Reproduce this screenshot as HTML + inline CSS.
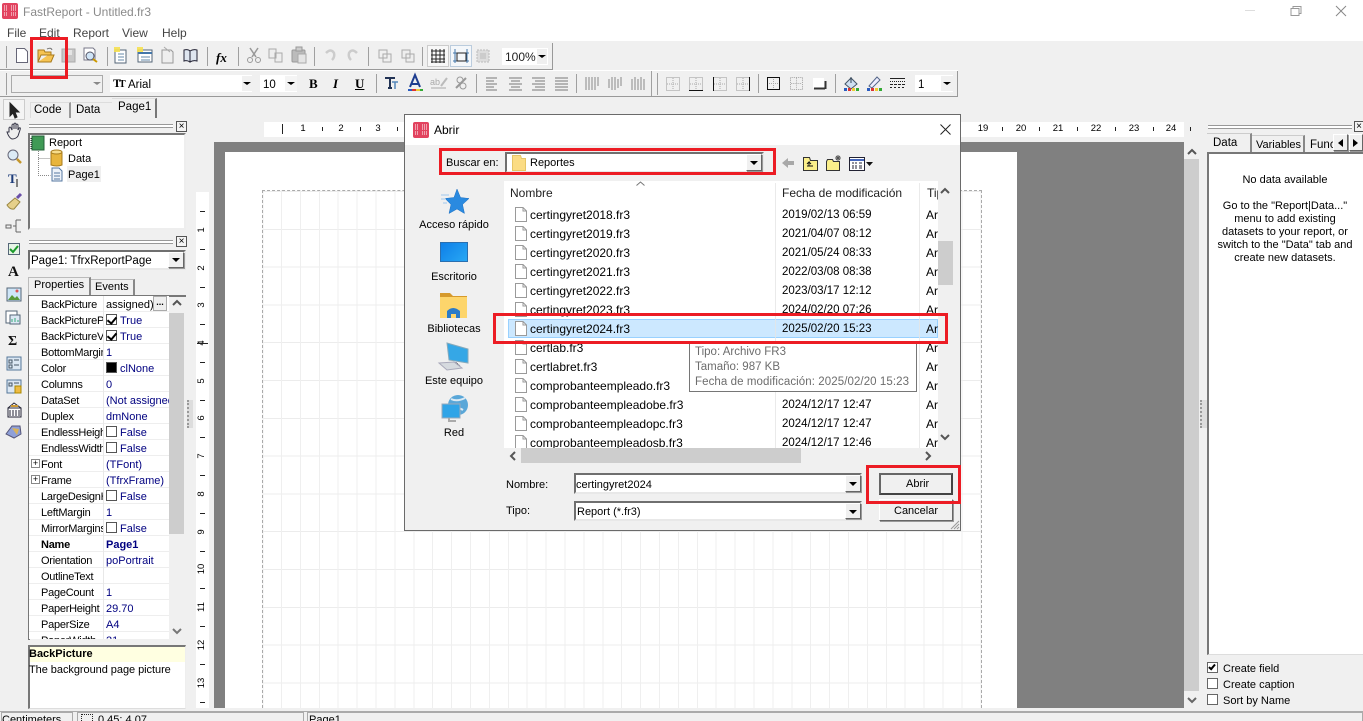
<!DOCTYPE html>
<html><head><meta charset="utf-8"><title>FastReport</title>
<style>
*{box-sizing:border-box}
html,body{margin:0;padding:0;width:1363px;height:721px;overflow:hidden;background:#f0f0f0;font:11px "Liberation Sans",sans-serif;color:#000}
#root{position:absolute;left:0;top:0;width:1363px;height:721px;overflow:hidden;background:#f0f0f0}
.a{position:absolute}
.t{position:absolute;white-space:nowrap;line-height:14px}
svg{position:absolute;overflow:visible}
.sep{position:absolute;width:1px;background:#a0a0a0}
.red{position:absolute;border:3px solid #ec1c24;z-index:50}
.sunk{position:absolute;background:#fff;border:2px solid;border-color:#6f6f6f #e8e8e8 #e8e8e8 #6f6f6f}
.btn{position:absolute;background:#f0f0f0;border:1px solid;border-color:#fff #666 #666 #fff;box-shadow:1px 1px 0 #999}
.ar{position:absolute;width:0;height:0;border-left:4px solid transparent;border-right:4px solid transparent;border-top:4px solid #000}
.grip{position:absolute;height:4px;border-top:1px solid #999;border-bottom:1px solid #999;background:#fff}
.xb{position:absolute;width:11px;height:11px;border:1px solid #555;background:#f4f4f4;font:10px/9px "Liberation Sans",sans-serif;text-align:center}
.r{height:16px;position:relative;border-bottom:1px solid #eee;white-space:nowrap;line-height:15px}
.r b,.r i{font-style:normal;font-weight:normal;position:absolute;top:1px;line-height:16px}
.r b{left:12px;width:62px;overflow:hidden;letter-spacing:-.25px}
.r i{left:77px;color:#000080}
.r .v{left:91px}
.r.n b,.r.n i{font-weight:bold}
.c{position:absolute;left:77px;top:2px;width:11px;height:11px;border:1px solid #555;background:#fff}
.c.k:after{content:"";position:absolute;left:2px;top:0;width:4px;height:7px;border:solid #000;border-width:0 2px 2px 0;transform:rotate(40deg)}
.f{height:19px;position:relative;font-size:12px;line-height:21px;white-space:nowrap}
.f span{position:absolute;top:0}
.f .d{left:278px;font-size:11.500px}
.f .y{left:422px}
.f .n{left:26px}
.f svg{left:11px;top:2px}
.hn{position:absolute;top:122px;font-size:9.5px;line-height:14px;width:20px;text-align:center}
.vn{position:absolute;left:195px;width:14px;height:14px;font-size:9.5px;line-height:14px;text-align:center;transform:rotate(-90deg)}
.ht{position:absolute;top:127px;width:1px;height:4px;background:#222}
.vt{position:absolute;left:200px;width:5px;height:1px;background:#222}
.lab{position:absolute;width:98px;left:405px;text-align:center;font-size:11px;line-height:14px}
.ck{position:absolute;left:1207px;width:11px;height:11px;border:1px solid #666;background:#fff}
</style></head><body><div id="root">
<svg width="0" height="0"><defs>
<symbol id="file" viewBox="0 0 12 15"><path d="M.5.5h7.5l3.5 3.5v10.500h-11z" fill="#fff" stroke="#9a9a9a"/><path d="M8 .5v3.500h3.500" fill="none" stroke="#9a9a9a"/></symbol>
<symbol id="logo" viewBox="0 0 16 16"><rect width="16" height="16" rx="2" fill="#e2435f"/><path d="M2 3h4M2 5h4M2 7h4M9 3h5M9 5h5M9 7h5M2 10h4M2 12h4M9 10h5M9 12h5" stroke="#fff" stroke-dasharray="1 1"/></symbol>
<symbol id="bx" viewBox="0 0 14 14"><rect x=".5" y=".5" width="13" height="13" fill="none" stroke="#999" stroke-dasharray="1 1"/><path d="M7 1v12M1 7h12" stroke="#aaa" stroke-dasharray="1 1"/></symbol>
</defs></svg>

<!-- title -->
<div class="a" style="left:0;top:0;width:1363px;height:41px;background:#fff"></div>
<svg style="left:2px;top:3px" width="16" height="16"><use href="#logo"/></svg>
<div class="t" style="left:23px;top:5px;font-size:12px;color:#8a8a8a">FastReport - Untitled.fr3</div>
<div class="t" style="left:7px;top:26px;font-size:12px;color:#444">File</div>
<div class="t" style="left:39px;top:26px;font-size:12px;color:#444">Edit</div>
<div class="t" style="left:73px;top:26px;font-size:12px;color:#444">Report</div>
<div class="t" style="left:122px;top:26px;font-size:12px;color:#444">View</div>
<div class="t" style="left:162px;top:26px;font-size:12px;color:#444">Help</div>
<svg style="left:1245px;top:5px" width="110" height="12"><path d="M0 5.500h10" stroke="#ddd"/><path d="M46 3.500h8v7h-8zM48 3.500v-2h8v7h-2" fill="none" stroke="#999"/><path d="M91 1l10 10M101 1l-10 10" stroke="#888"/></svg>

<!-- toolbars -->
<div class="a" style="left:0;top:43px;width:553px;height:27px;border-right:1px solid #999;border-bottom:1px solid #999"></div>
<div class="a" style="left:0;top:70px;width:958px;height:1px;background:#fff"></div>
<div class="a" style="left:0;top:71px;width:958px;height:26px;border-right:1px solid #999;border-bottom:1px solid #999"></div>
<div class="sep" style="left:6px;top:46px;height:22px"></div><div class="sep" style="left:6px;top:73px;height:22px"></div>
<div class="sep" style="left:107px;top:47px;height:19px"></div><div class="sep" style="left:207px;top:47px;height:19px"></div><div class="sep" style="left:238px;top:47px;height:19px"></div><div class="sep" style="left:314px;top:47px;height:19px"></div><div class="sep" style="left:368px;top:47px;height:19px"></div><div class="sep" style="left:422px;top:47px;height:19px"></div>
<svg style="left:0;top:0" width="560" height="70">
<path d="M16.500 48.500h8l3 3v11h-11z" fill="#fff" stroke="#667"/>
<path d="M38 62v-12h6l1 2h6v3h-10l-3 7h13l3-7h-6" fill="#f6c453" stroke="#a87a1c"/><path d="M47 49q4-2 5 1" fill="none" stroke="#777"/>
<rect x="62" y="49" width="13" height="13" fill="#c8c8c8" stroke="#aaa"/><rect x="65" y="50" width="7" height="5" fill="#e4e4e4"/>
<path d="M84 48h9l2 2v10h-11z" fill="#fff" stroke="#778"/><circle cx="90" cy="56" r="4" fill="#cfe4f6" stroke="#556"/><path d="M93 59l4 3" stroke="#c90" stroke-width="2"/>
<path d="M115 50h11v13h-11z" fill="#fff" stroke="#567"/><path d="M118 54h6M118 57h6M118 60h6" stroke="#68a"/><rect x="114" y="47" width="6" height="5" fill="#f5e050" opacity=".9"/>
<path d="M138 50h14v12h-14z" fill="#fff" stroke="#567"/><path d="M138 53h14" stroke="#47a" stroke-width="2"/><path d="M141 57h9M141 60h9" stroke="#68a"/><rect x="137" y="47" width="6" height="5" fill="#f5e050" opacity=".9"/>
<path d="M162 50h9l2 2v11h-11z" fill="#eee" stroke="#999"/><path d="M164 47l6 5" stroke="#aaa"/>
<path d="M184 50q4-1 6 1v11q-3-2-6-1zM190 51q3-2 7-1v11q-4-1-7 1z" fill="#dfe6f0" stroke="#223"/>
<text x="216" y="62" font-family="Liberation Serif" font-style="italic" font-weight="bold" font-size="13">fx</text>
<path d="M250 48l6 9M258 48l-6 9" stroke="#999" stroke-width="1.500"/><circle cx="250" cy="60" r="2.500" fill="none" stroke="#999"/><circle cx="258" cy="60" r="2.500" fill="none" stroke="#999"/>
<path d="M269 49h7v9h-7zM275 53h7v9h-7z" fill="#eee" stroke="#aaa"/>
<rect x="292" y="50" width="13" height="12" rx="1" fill="#bbb" stroke="#999"/><rect x="296" y="47" width="6" height="4" fill="#ccc" stroke="#999"/><rect x="298" y="54" width="8" height="9" fill="#e4e4e4" stroke="#aaa"/>
<path d="M326 53q5-5 8 0q1 4-2 7" fill="none" stroke="#ccc" stroke-width="2.500"/><path d="M357 53q-5-5-8 0q-1 4 2 7" fill="none" stroke="#ccc" stroke-width="2.500"/>
<path d="M379 50h8v8h-8zM383 54h8v8h-8z" fill="none" stroke="#aaa"/><path d="M402 50h8v8h-8zM406 54h8v8h-8z" fill="#eee" stroke="#aaa"/>
<rect x="427.500" y="45.500" width="21" height="21" fill="#f8f8f8" stroke="#ccc"/><path d="M433 49v14M437 49v14M441 49v14M445 49v14M432 51h14M432 55h14M432 59h14M432 62h14" stroke="#222" transform="translate(-1 0)"/>
<rect x="450.500" y="45.500" width="21" height="21" fill="#f4f7fa" stroke="#bcd"/><path d="M455 49v14M467 49v14M453 53h16M453 61h16" stroke="#47a"/><rect x="457" y="53" width="9" height="8" fill="none" stroke="#222"/>
<rect x="477" y="50" width="12" height="12" fill="#ddd" stroke="#bbb" stroke-dasharray="2 1"/><rect x="480" y="53" width="6" height="6" fill="#ccc"/>
</svg>
<div class="a" style="left:502px;top:48px;width:46px;height:17px;background:#fff"></div>
<div class="t" style="left:505px;top:50px;font-size:12px;color:#222">100%</div>
<div class="a" style="left:537px;top:49px;width:10px;height:15px;background:#efefef"></div><div class="ar" style="left:538px;top:55px;border-width:3px 4px 0"></div>

<div class="a" style="left:11px;top:75px;width:92px;height:18px;border:1px solid #aaa"></div><div class="ar" style="left:93px;top:82px;border-top-color:#888;border-width:3px 4px 0"></div>
<div class="a" style="left:110px;top:75px;width:142px;height:17px;background:#fff"></div>
<div class="t" style="left:113px;top:76px;font:bold 12px 'Liberation Serif',serif">T</div><div class="t" style="left:119px;top:79px;font:bold 10px 'Liberation Serif',serif">T</div>
<div class="t" style="left:128px;top:78px;font-size:11.500px">Arial</div>
<div class="a" style="left:242px;top:76px;width:10px;height:15px;background:#f0f0f0"></div><div class="ar" style="left:243px;top:82px;border-width:3px 4px 0"></div>
<div class="a" style="left:260px;top:75px;width:37px;height:17px;background:#fff"></div><div class="t" style="left:263px;top:78px;font-size:11.500px">10</div>
<div class="a" style="left:285px;top:76px;width:12px;height:15px;background:#f4f4f4"></div><div class="ar" style="left:287px;top:82px;border-width:3px 4px 0"></div>
<div class="t" style="left:309px;top:76px;font:bold 13px 'Liberation Serif',serif">B</div>
<div class="t" style="left:333px;top:76px;font:italic bold 13px 'Liberation Serif',serif">I</div>
<div class="t" style="left:355px;top:76px;font:bold 13px 'Liberation Serif',serif;text-decoration:underline">U</div>
<div class="sep" style="left:376px;top:74px;height:19px"></div><div class="sep" style="left:476px;top:74px;height:19px"></div><div class="sep" style="left:576px;top:74px;height:19px"></div><div class="sep" style="left:651px;top:71px;height:25px"></div><div class="sep" style="left:657px;top:73px;height:22px"></div><div class="sep" style="left:758px;top:74px;height:19px"></div><div class="sep" style="left:835px;top:74px;height:19px"></div>
<svg style="left:0;top:0" width="960" height="100">
<path d="M385 78h10M390 78v10M388 88h4" stroke="#223355" stroke-width="2" fill="none"/><path d="M392 82h6M395 82v7" stroke="#5588bb" stroke-width="1.500"/>
<path d="M410 87l5-12 5 12M412 84h6" fill="none" stroke="#1d3c8f" stroke-width="2"/><path d="M408 89h4v2h-4z" fill="#2a5cc0"/><path d="M412 89h4v2h-4z" fill="#d33"/><path d="M416 89h4v2h-4z" fill="#ec3"/><path d="M420 89h3v2h-3z" fill="#3a3"/>
<text x="430" y="85" font-size="9" fill="#aaa">ab</text><path d="M441 86l6-8" stroke="#bbb" stroke-width="2"/><path d="M431 88h15" stroke="#ccc" stroke-width="2"/>
<path d="M456 88l10-10" stroke="#999" stroke-width="2"/><circle cx="460" cy="80" r="3" fill="none" stroke="#999"/><circle cx="463" cy="86" r="3" fill="none" stroke="#999"/>
<path d="M486 78h11M486 81h8M486 84h11M486 87h8M486 90h11M509 78h13M511 81h9M509 84h13M511 87h9M509 90h13M532 78h13M535 81h10M532 84h13M535 87h10M532 90h13M555 78h13M555 81h13M555 84h13M555 87h13M555 90h13" stroke="#777"/>
<path d="M586 77v13M589 77v13M592 77v13M595 77v13M598 77v9M609 79v9M612 77v13M615 77v13M618 79v9M621 77v9M632 79v11M635 77v13M638 79v11M641 77v13M644 79v11" stroke="#888"/>
<use href="#bx" x="666" y="77" width="14" height="14"/><use href="#bx" x="689" y="77" width="14" height="14"/><path d="M689 90.500h14" stroke="#111"/><use href="#bx" x="713" y="77" width="14" height="14"/><path d="M713.500 77v14" stroke="#111"/><use href="#bx" x="736" y="77" width="14" height="14"/><path d="M749.500 77v14" stroke="#111"/>
<rect x="767.500" y="77.500" width="12" height="12" fill="none" stroke="#111"/><path d="M773.500 79v9M769 83.500h9" stroke="#aaa" stroke-dasharray="1 1"/>
<use href="#bx" x="790" y="77" width="13" height="13"/>
<rect x="813" y="78" width="11" height="10" fill="#fff"/><path d="M814 88.500h11M825.500 81v8" stroke="#333" stroke-width="2"/>
<path d="M845 84l6-6 6 6-6 5z" fill="#cfe0f2" stroke="#456"/><path d="M851 77v6" stroke="#345"/><path d="M844 88h3v3h-3z" fill="#2a5cc0"/><path d="M848 88h3v3h-3z" fill="#d33"/><path d="M852 88h3v3h-3z" fill="#ec3"/><path d="M856 88h3v3h-3z" fill="#3a3"/>
<path d="M869 86l8-9 3 3-8 8z" fill="#eef" stroke="#568"/><path d="M867 88h3v3h-3z" fill="#2a5cc0"/><path d="M871 88h3v3h-3z" fill="#d33"/><path d="M875 88h3v3h-3z" fill="#ec3"/><path d="M879 88h3v3h-3z" fill="#3a3"/>
<path d="M890 78.500h15" stroke="#222"/><path d="M890 81.500h15" stroke="#222" stroke-dasharray="1 1"/><path d="M890 84.500h15" stroke="#222" stroke-dasharray="3 1"/><path d="M890 87.500h15" stroke="#222" stroke-dasharray="2 2"/>
</svg>
<div class="a" style="left:915px;top:75px;width:38px;height:17px;background:#fff"></div><div class="t" style="left:918px;top:78px;font-size:11.500px">1</div>
<div class="a" style="left:941px;top:76px;width:12px;height:15px;background:#f0f0f0"></div><div class="ar" style="left:943px;top:82px;border-width:3px 4px 0"></div>

<!-- page tabs -->
<div class="a" style="left:3px;top:99px;width:22px;height:21px;background:#f4f4f4;border:1px solid #ccc"></div>
<div class="a" style="left:30px;top:102px;width:41px;height:16px;border-right:2px solid #999;border-top:1px solid #ddd;border-left:1px solid #ddd"></div>
<div class="a" style="left:72px;top:102px;width:40px;height:16px;border-top:1px solid #ddd"></div>
<div class="a" style="left:112px;top:98px;width:45px;height:20px;border-right:2px solid #777;border-top:1px solid #ddd;background:#f0f0f0"></div>
<div class="t" style="left:34px;top:103px;font-size:11.500px">Code</div><div class="t" style="left:76px;top:103px;font-size:11.500px">Data</div><div class="t" style="left:118px;top:100px;font-size:11.500px">Page1</div>

<!-- left tools -->
<svg style="left:0;top:0" width="28" height="450">
<path d="M10 103v13l3-3 2 5 2-1-2-5h4z" fill="#222" stroke="#222"/>
<path d="M9 132v-4q1-2 2 0l1 2v-5q1-2 2 0v4-5q1-2 2 0v5-4q1-2 2 0v5l1-2q2-1 1 2l-2 6q-2 3-6 3-3-1-5-7z" fill="#eee" stroke="#334" />
<circle cx="13" cy="155" r="5" fill="#dcebf7" stroke="#667"/><path d="M17 159l4 4" stroke="#c4962c" stroke-width="2.500"/>
<text x="8" y="183" font-family="Liberation Serif" font-weight="bold" font-size="13" fill="#1d3c7a">T</text><path d="M17 179v8" stroke="#111"/>
<path d="M7 205l8-7 5 4-6 7q-4 1-7-4z" fill="#e6d08a" stroke="#9a8742"/><path d="M17 198l4-4" stroke="#6a4fa8" stroke-width="3"/>
<path d="M6 225h5v3h-5zM13 226h3M16 220h5M16 232h5M16 220v12" fill="none" stroke="#666"/>
<rect x="8.500" y="243.500" width="11" height="11" fill="#e6f4e6" stroke="#567"/><path d="M10 249l3 3 5-6" fill="none" stroke="#1a9a2a" stroke-width="2"/>
<text x="8" y="276" font-family="Liberation Serif" font-weight="bold" font-size="15" fill="#111">A</text>
<rect x="7" y="288" width="14" height="13" fill="#cfe6f8" stroke="#567"/><path d="M8 300l4-5 3 3 2-2 3 4z" fill="#5a9a3a"/><circle cx="17" cy="291" r="1.500" fill="#d55"/>
<rect x="6" y="311" width="11" height="12" fill="#fff" stroke="#567"/><rect x="10" y="315" width="10" height="9" fill="#dde8f4" stroke="#567"/><path d="M12 322v-3M15 322v-4M18 322v-2" stroke="#3a7"/>
<text x="8" y="345" font-family="Liberation Serif" font-weight="bold" font-size="14" fill="#111">Σ</text>
<rect x="7" y="357" width="14" height="13" fill="#dbe7f3" stroke="#56779a"/><path d="M9 360h3v3h-3zM9 365h3v3h-3zM14 360h5M14 365h5" stroke="#456" fill="none"/>
<rect x="7" y="380" width="14" height="13" fill="#dbe7f3" stroke="#56779a"/><path d="M9 383h3v3h-3zM14 383h5" stroke="#456" fill="none"/><rect x="15" y="386" width="6" height="7" fill="#eebb44" stroke="#a80"/>
<path d="M8 408h13v9h-13zM8 408l6-5 7 5" fill="#fff" stroke="#223"/><path d="M10 410v6M13 410v6M16 410v6M19 410v6" stroke="#223"/><path d="M11 406h7" stroke="#c93" stroke-width="2"/>
<path d="M6 434l6-8h8l1 8-7 4z" fill="#8fa0d8" stroke="#557"/><path d="M12 428l7 1-2 6z" fill="#d8b25a"/>
</svg>

<!-- object tree -->
<div class="grip" style="left:29px;top:124px;width:144px"></div>
<div class="xb" style="left:176px;top:121px">×</div>
<div class="a" style="left:28px;top:133px;width:158px;height:97px;background:#fff;border:2px solid;border-color:#777 #eee #eee #777"></div>
<svg style="left:30px;top:134px" width="60" height="50">
<rect x="2" y="2" width="12" height="14" fill="#3f9a55" stroke="#24603a"/><path d="M1 4v11" stroke="#222" stroke-dasharray="1 1"/>
<path d="M8.500 17v24.500h12M8.500 24.500h12" stroke="#888" stroke-dasharray="1 1" fill="none"/>
<path d="M21 18q5-2 11 0v13q-5 2-11 0z" fill="#e8b53d" stroke="#a97c1c"/><ellipse cx="26.500" cy="18" rx="5.500" ry="2" fill="#f7dc8a" stroke="#a97c1c"/>
<path d="M22 34h7l3 3v10h-10z" fill="#eef3fa" stroke="#5577a0"/><path d="M24 39h6M24 42h6M24 45h6" stroke="#5577a0"/>
</svg>
<div class="t" style="left:49px;top:136px;font-size:11px">Report</div>
<div class="t" style="left:68px;top:152px;font-size:11px">Data</div>
<div class="a" style="left:67px;top:166px;width:34px;height:16px;background:#efefef"></div>
<div class="t" style="left:68px;top:168px;font-size:11px">Page1</div>

<!-- inspector -->
<div class="grip" style="left:29px;top:240px;width:144px"></div>
<div class="xb" style="left:176px;top:236px">×</div>
<div class="sunk" style="left:28px;top:250px;width:158px;height:20px"></div>
<div class="t" style="left:31px;top:254px;font-size:11.500px">Page1: TfrxReportPage</div>
<div class="btn" style="left:168px;top:252px;width:16px;height:16px"></div><div class="ar" style="left:172px;top:258px"></div>
<div class="a" style="left:28px;top:277px;width:63px;height:19px;background:#f0f0f0;border:1px solid #bbb;border-bottom:0;border-right:2px solid #888"></div>
<div class="a" style="left:91px;top:279px;width:44px;height:17px;border-top:1px solid #bbb;border-right:2px solid #888"></div>
<div class="t" style="left:34px;top:278px;font-size:11px">Properties</div><div class="t" style="left:95px;top:280px;font-size:11px">Events</div>
<div class="a" style="left:28px;top:295px;width:158px;height:345px;background:#f0f0f0;border:2px solid;border-color:#777 transparent #777 #777;border-right:0;border-bottom:0"></div>
<div class="a" style="left:29px;top:296px;width:140px;height:343px;background:#fff;overflow:hidden">
<div class="r"><b>BackPicture</b><i style="left:77px;color:#000">assigned)</i><div class="a" style="left:124px;top:0;width:14px;height:15px;background:#eee;border:1px solid #aaa;font:bold 9px/10px 'Liberation Sans';text-align:center">...</div></div>
<div class="r"><b>BackPicturePr</b><span class="c k"></span><i class="v">True</i></div>
<div class="r"><b>BackPictureVi</b><span class="c k"></span><i class="v">True</i></div>
<div class="r"><b>BottomMargin</b><i>1</i></div>
<div class="r"><b>Color</b><span class="c" style="background:#000"></span><i style="left:91px">clNone</i></div>
<div class="r"><b>Columns</b><i>0</i></div>
<div class="r"><b>DataSet</b><i>(Not assigned</i></div>
<div class="r"><b>Duplex</b><i>dmNone</i></div>
<div class="r"><b>EndlessHeight</b><span class="c"></span><i class="v">False</i></div>
<div class="r"><b>EndlessWidth</b><span class="c"></span><i class="v">False</i></div>
<div class="r"><b>Font</b><i>(TFont)</i><div class="a" style="left:2px;top:3px;width:9px;height:9px;border:1px solid #888;font:9px/7px 'Liberation Sans';text-align:center">+</div></div>
<div class="r"><b>Frame</b><i>(TfrxFrame)</i><div class="a" style="left:2px;top:3px;width:9px;height:9px;border:1px solid #888;font:9px/7px 'Liberation Sans';text-align:center">+</div></div>
<div class="r"><b>LargeDesignH</b><span class="c"></span><i class="v">False</i></div>
<div class="r"><b>LeftMargin</b><i>1</i></div>
<div class="r"><b>MirrorMargins</b><span class="c"></span><i class="v">False</i></div>
<div class="r n"><b>Name</b><i>Page1</i></div>
<div class="r"><b>Orientation</b><i>poPortrait</i></div>
<div class="r"><b>OutlineText</b></div>
<div class="r"><b>PageCount</b><i>1</i></div>
<div class="r"><b>PaperHeight</b><i>29.70</i></div>
<div class="r"><b>PaperSize</b><i>A4</i></div>
<div class="r"><b>PaperWidth</b><i>21</i></div>
<div class="a" style="left:74px;top:0;width:1px;height:343px;background:#e8e8e8"></div>
</div>
<div class="a" style="left:169px;top:313px;width:15px;height:221px;background:#cdcdcd"></div>
<svg style="left:169px;top:298px" width="16" height="340"><path d="M4 7l4-4 4 4" fill="none" stroke="#555" stroke-width="2"/><path d="M4 331l4 4 4-4" fill="none" stroke="#777" stroke-width="2"/></svg>
<div class="a" style="left:28px;top:645px;width:158px;height:64px;background:#fff;border:1px solid;border-color:#777 #eee #ddd #777;border-width:2px 1px 1px 2px"></div>
<div class="a" style="left:30px;top:647px;width:155px;height:15px;background:#ffffe1"></div>
<div class="t" style="left:29px;top:647px;font-size:11px;font-weight:bold">BackPicture</div>
<div class="t" style="left:29px;top:663px;font-size:11px;letter-spacing:-.05px">The background page picture</div>

<!-- splitters -->
<div class="a" style="left:187px;top:400px;width:6px;height:28px;background:#ddd;border-left:2px dotted #999"></div>
<div class="a" style="left:1200px;top:400px;width:7px;height:28px;background:#ddd;border-left:2px dotted #999"></div>

<!-- workspace -->
<div class="a" style="left:214px;top:142px;width:970px;height:566px;background:#808080"></div>
<div class="a" style="left:192px;top:120px;width:1000px;height:22px;background:#f0f0f0"></div>
<div class="a" style="left:264px;top:122px;width:920px;height:15px;background:#fff"></div>
<div class="a" style="left:196px;top:192px;width:13px;height:516px;background:#fff"></div>
<div class="a" style="left:225px;top:152px;width:792px;height:556px;background:#fff"></div>
<div class="a" style="left:262px;top:190px;width:720px;height:518px;border:1px dashed #aaa;border-bottom:0;background-image:repeating-linear-gradient(to right,#efefef 0,#efefef 1px,transparent 1px,transparent 18.9px),repeating-linear-gradient(to bottom,#ececec 0,#ececec 1px,transparent 1px,transparent 37.8px);background-position:18px 0,0 0"></div>
<div class="ht" style="left:282px;top:124px;height:10px"></div>
<div class="hn" style="left:293px">1</div><div class="hn" style="left:331px">2</div><div class="hn" style="left:368px">3</div><div class="hn" style="left:973px">19</div><div class="hn" style="left:1011px">20</div><div class="hn" style="left:1048px">21</div><div class="hn" style="left:1086px">22</div><div class="hn" style="left:1124px">23</div><div class="hn" style="left:1161px">24</div>
<div class="ht" style="left:322px"></div><div class="ht" style="left:360px"></div><div class="ht" style="left:397px"></div><div class="ht" style="left:1002px"></div><div class="ht" style="left:1039px"></div><div class="ht" style="left:1077px"></div><div class="ht" style="left:1115px"></div><div class="ht" style="left:1153px"></div><div class="ht" style="left:1190px"></div>
<div class="vn" style="top:223px">1</div><div class="vn" style="top:261px">2</div><div class="vn" style="top:298px">3</div><div class="vn" style="top:336px">4</div><div class="vn" style="top:374px">5</div><div class="vn" style="top:411px">6</div><div class="vn" style="top:449px">7</div><div class="vn" style="top:487px">8</div><div class="vn" style="top:525px">9</div><div class="vn" style="top:562px">10</div><div class="vn" style="top:600px">11</div><div class="vn" style="top:638px">12</div><div class="vn" style="top:676px">13</div>
<div class="vt" style="top:211px"></div><div class="vt" style="top:249px"></div><div class="vt" style="top:287px"></div><div class="vt" style="top:324px"></div><div class="vt" style="top:343px;left:197px;width:11px"></div><div class="vt" style="top:362px"></div><div class="vt" style="top:400px"></div><div class="vt" style="top:437px"></div><div class="vt" style="top:475px"></div><div class="vt" style="top:513px"></div><div class="vt" style="top:551px"></div><div class="vt" style="top:588px"></div><div class="vt" style="top:626px"></div><div class="vt" style="top:664px"></div><div class="vt" style="top:702px"></div>
<!-- main v scrollbar -->
<div class="a" style="left:1184px;top:142px;width:16px;height:566px;background:#f0f0f0"></div>
<div class="a" style="left:1184px;top:159px;width:15px;height:532px;background:#cdcdcd"></div>
<svg style="left:1184px;top:145px" width="16" height="562"><path d="M4 9l4-4 4 4" fill="none" stroke="#555" stroke-width="2"/><path d="M4 553l4 4 4-4" fill="none" stroke="#666" stroke-width="2"/></svg>

<!-- right panel -->
<div class="grip" style="left:1208px;top:125px;width:144px"></div>
<div class="xb" style="left:1354px;top:121px;width:9px;border-right:0">×</div>
<div class="a" style="left:1207px;top:133px;width:45px;height:21px;background:#f0f0f0;border-top:1px solid #ccc;border-right:2px solid #888"></div>
<div class="a" style="left:1252px;top:135px;width:53px;height:18px;border-top:1px solid #ccc;border-right:2px solid #888"></div>
<div class="t" style="left:1213px;top:136px;font-size:11.500px">Data</div>
<div class="t" style="left:1256px;top:138px;font-size:11px">Variables</div>
<div class="t" style="left:1310px;top:138px;font-size:11.500px;width:23px;overflow:hidden">Functions</div>
<div class="btn" style="left:1333px;top:134px;width:15px;height:17px"></div><div class="a" style="left:1338px;top:139px;width:0;height:0;border:4px solid transparent;border-left:0;border-right:5px solid #000"></div>
<div class="btn" style="left:1349px;top:134px;width:14px;height:17px"></div><div class="a" style="left:1353px;top:139px;width:0;height:0;border:4px solid transparent;border-right:0;border-left:5px solid #000"></div>
<div class="a" style="left:1207px;top:152px;width:156px;height:503px;background:#fff;border-left:2px solid #777;border-top:2px solid #777;border-bottom:1px solid #ddd"></div>
<div class="a" style="left:1209px;top:174px;width:152px;text-align:center;font-size:11px;line-height:13px">No data available<br><br>Go to the "Report|Data..."<br>menu to add existing<br>datasets to your report, or<br>switch to the "Data" tab and<br>create new datasets.</div>
<div class="ck" style="top:662px"><div style="position:absolute;left:2px;top:0;width:4px;height:7px;border:solid #000;border-width:0 2px 2px 0;transform:rotate(40deg)"></div></div>
<div class="ck" style="top:678px"></div><div class="ck" style="top:694px"></div>
<div class="t" style="left:1223px;top:662px;font-size:11px">Create field</div>
<div class="t" style="left:1223px;top:678px;font-size:11px">Create caption</div>
<div class="t" style="left:1223px;top:694px;font-size:11px">Sort by Name</div>

<!-- status -->
<div class="a" style="left:0;top:711px;width:1363px;height:1px;background:#aaa"></div>
<div class="a" style="left:1px;top:712px;width:72px;height:9px;border:1px solid #aaa;border-bottom:0"></div>
<div class="a" style="left:77px;top:712px;width:227px;height:9px;border:1px solid #aaa;border-bottom:0"></div>
<div class="a" style="left:307px;top:712px;width:1056px;height:9px;border:1px solid #aaa;border-bottom:0"></div>
<div class="t" style="left:2px;top:713px;font-size:11px">Centimeters</div>
<div class="t" style="left:98px;top:713px;font-size:11px">0.45; 4.07</div>
<div class="t" style="left:309px;top:713px;font-size:11px">Page1</div>
<div class="a" style="left:81px;top:714px;width:12px;height:7px;border:1px dotted #222;border-bottom:0"></div>

<!-- dialog -->
<div class="a" style="left:404px;top:114px;width:557px;height:417px;background:#f0f0f0;border:1px solid #6a6a6a;z-index:10">
<div class="a" style="left:0;top:0;width:555px;height:30px;background:#fff"></div>
</div>
<div style="position:absolute;left:0;top:0;z-index:11">
<svg style="left:413px;top:122px" width="16" height="16"><use href="#logo"/></svg>
<div class="t" style="left:434px;top:123px;font-size:12px">Abrir</div>
<svg style="left:940px;top:124px" width="11" height="11"><path d="M.5.500l10 10M10.500.500l-10 10" stroke="#222"/></svg>

<div class="t" style="left:446px;top:156px;font-size:11px">Buscar en:</div>
<div class="sunk" style="left:505px;top:152px;width:259px;height:21px"></div>
<svg style="left:512px;top:155px" width="14" height="16"><path d="M.5.500h8l1 3h4v12h-13z" fill="#fbdc84" stroke="#e6c566"/></svg>
<div class="t" style="left:530px;top:156px;font-size:11px">Reportes</div>
<div class="btn" style="left:746px;top:154px;width:16px;height:17px"></div><div class="ar" style="left:750px;top:161px"></div>
<svg style="left:780px;top:154px" width="96" height="20">
<path d="M2 9l6-5v3h6v4h-6v3z" fill="#a8a8a8"/>
<path d="M23.500 3.500v13h14v-10h-7l-1-3z" fill="#fbef8a" stroke="#333"/><path d="M27 12h6M29 12v-4l-2 2M29 8l2 2" stroke="#111" fill="none"/>
<path d="M46.500 7.500v9h13v-9h-6l-1-2h-5z" fill="#fbef8a" stroke="#333"/><path d="M58 1v6M55 4h6M56 2l4 4M60 2l-4 4" stroke="#555"/>
<rect x="69.500" y="3.500" width="15" height="13" fill="#fff" stroke="#223"/><path d="M70 6h14" stroke="#4466bb" stroke-width="2"/><path d="M72 9h2M75 9h2M79 9h3M72 12h2M75 12h2M79 12h3M72 14h2M75 14h2M79 14h3" stroke="#223"/>
<path d="M86 8h7l-3.500 4z" fill="#111"/>
</svg>

<!-- places -->
<svg style="left:440px;top:187px" width="30" height="30"><path d="M17 2l3.500 8.500 8.500 1-6.500 6 2 9-7.500-4.500-8 4.500 2-9-6-6 9-1z" fill="#2a8ae0" stroke="#1d6fc0" stroke-width=".5"/><path d="M1 8h8M1 12h5M3 16h4" stroke="#9fc8ee"/></svg>
<div class="lab" style="top:218px">Acceso rápido</div>
<div class="a" style="left:440px;top:242px;width:28px;height:20px;background:linear-gradient(135deg,#0e7fe8,#28a8f4);border:1px solid #2a6fb0"></div>
<div class="lab" style="top:270px">Escritorio</div>
<svg style="left:439px;top:292px" width="29" height="27"><path d="M1 1h10l3 3h14v2h-27z" fill="#d69a2c"/><path d="M1 5h27v21h-27z" fill="#fdd56b"/><path d="M8 26v-7q6-6 13 0v7h-4v-4h-5v4z" fill="#2a7bc8"/></svg>
<div class="lab" style="top:322px">Bibliotecas</div>
<svg style="left:438px;top:342px" width="32" height="30"><path d="M9 1l21 6v14l-19-3z" fill="#35a7e6" stroke="#8ab"/><path d="M18 20v3l4 1" stroke="#99a" stroke-width="2"/><path d="M1 21l15-1 8 6-15 2z" fill="#d6dadf" stroke="#aab"/></svg>
<div class="lab" style="top:374px">Este equipo</div>
<svg style="left:441px;top:394px" width="30" height="30"><circle cx="17" cy="11" r="10" fill="#5aa7d8"/><path d="M10 5q6 3 14-1M13 18q3-6 9-2" stroke="#dbeaf4" fill="none" stroke-width="2"/><rect x="1" y="10" width="18" height="14" fill="#2fa4e7" stroke="#9ab"/><path d="M8 24v3h7" stroke="#aaa" stroke-width="2" fill="none"/></svg>
<div class="lab" style="top:426px">Red</div>

<!-- file list -->
<div class="a" style="left:504px;top:181px;width:434px;height:267px;background:#fff;overflow:hidden">
<div class="t" style="left:6px;top:5px;font-size:12px;color:#222">Nombre</div>
<div class="t" style="left:278px;top:5px;font-size:12px;color:#222">Fecha de modificación</div>
<div class="t" style="left:423px;top:5px;font-size:12px;color:#222">Tip</div>
<svg style="left:132px;top:0" width="9" height="5"><path d="M.5 4.500l4-3.500 4 3.500" fill="none" stroke="#777"/></svg>
<div class="a" style="left:0;top:24px;width:434px">
<div class="f"><svg width="12" height="15"><use href="#file"/></svg><span class="n">certingyret2018.fr3</span><span class="d">2019/02/13 06:59</span><span class="y">Ar</span></div>
<div class="f"><svg width="12" height="15"><use href="#file"/></svg><span class="n">certingyret2019.fr3</span><span class="d">2021/04/07 08:12</span><span class="y">Ar</span></div>
<div class="f"><svg width="12" height="15"><use href="#file"/></svg><span class="n">certingyret2020.fr3</span><span class="d">2021/05/24 08:33</span><span class="y">Ar</span></div>
<div class="f"><svg width="12" height="15"><use href="#file"/></svg><span class="n">certingyret2021.fr3</span><span class="d">2022/03/08 08:38</span><span class="y">Ar</span></div>
<div class="f"><svg width="12" height="15"><use href="#file"/></svg><span class="n">certingyret2022.fr3</span><span class="d">2023/03/17 12:12</span><span class="y">Ar</span></div>
<div class="f"><svg width="12" height="15"><use href="#file"/></svg><span class="n">certingyret2023.fr3</span><span class="d">2024/02/20 07:26</span><span class="y">Ar</span></div>
<div class="f"><div class="a" style="left:4px;top:0;width:430px;height:19px;background:#cce8ff;border:1px solid #99d1ff"></div><svg width="12" height="15"><use href="#file"/></svg><span class="n">certingyret2024.fr3</span><span class="d">2025/02/20 15:23</span><span class="y">Ar</span></div>
<div class="f"><svg width="12" height="15"><use href="#file"/></svg><span class="n">certlab.fr3</span><span class="y">Ar</span></div>
<div class="f"><svg width="12" height="15"><use href="#file"/></svg><span class="n">certlabret.fr3</span><span class="y">Ar</span></div>
<div class="f"><svg width="12" height="15"><use href="#file"/></svg><span class="n">comprobanteempleado.fr3</span><span class="y">Ar</span></div>
<div class="f"><svg width="12" height="15"><use href="#file"/></svg><span class="n">comprobanteempleadobe.fr3</span><span class="d">2024/12/17 12:47</span><span class="y">Ar</span></div>
<div class="f"><svg width="12" height="15"><use href="#file"/></svg><span class="n">comprobanteempleadopc.fr3</span><span class="d">2024/12/17 12:47</span><span class="y">Ar</span></div>
<div class="f"><svg width="12" height="15"><use href="#file"/></svg><span class="n">comprobanteempleadosb.fr3</span><span class="d">2024/12/17 12:46</span><span class="y">Ar</span></div>
</div>
<div class="a" style="left:271px;top:2px;width:1px;height:265px;background:#e5e5e5;opacity:.8"></div>
<div class="a" style="left:415px;top:2px;width:1px;height:265px;background:#e5e5e5;opacity:.8"></div>
</div>
<div class="a" style="left:938px;top:241px;width:15px;height:44px;background:#cdcdcd"></div>
<svg style="left:938px;top:186px" width="15" height="258"><path d="M3 7l4-4 4 4" fill="none" stroke="#555" stroke-width="2"/><path d="M3 249l4 4 4-4" fill="none" stroke="#555" stroke-width="2"/></svg>
<div class="a" style="left:521px;top:448px;width:280px;height:15px;background:#cdcdcd"></div>
<svg style="left:508px;top:451px" width="430" height="10"><path d="M7 1l-4 4 4 4" fill="none" stroke="#555" stroke-width="2"/><path d="M418 1l4 4-4 4" fill="none" stroke="#555" stroke-width="2"/></svg>
<div class="a" style="left:689px;top:341px;width:228px;height:51px;background:#fff;border:1px solid #767676"></div>
<div class="t" style="left:695px;top:345px;font-size:11.500px;color:#6d6d6d">Tipo: Archivo FR3</div>
<div class="t" style="left:695px;top:360px;font-size:11.500px;color:#6d6d6d">Tamaño: 987 KB</div>
<div class="t" style="left:695px;top:375px;font-size:11.500px;color:#6d6d6d;letter-spacing:.08px">Fecha de modificación: 2025/02/20 15:23</div>

<!-- bottom -->
<div class="t" style="left:506px;top:478px;font-size:11px">Nombre:</div>
<div class="t" style="left:506px;top:504px;font-size:11px">Tipo:</div>
<div class="sunk" style="left:574px;top:473px;width:288px;height:21px"></div>
<div class="sunk" style="left:574px;top:501px;width:288px;height:20px"></div>
<div class="t" style="left:576px;top:478px;font-size:11px">certingyret2024</div>
<div class="t" style="left:577px;top:505px;font-size:11px">Report (*.fr3)</div>
<div class="btn" style="left:845px;top:475px;width:16px;height:17px"></div><div class="ar" style="left:849px;top:482px"></div>
<div class="btn" style="left:845px;top:503px;width:16px;height:16px"></div><div class="ar" style="left:849px;top:510px"></div>
<div class="a" style="left:879px;top:473px;width:74px;height:22px;background:#f0f0f0;border:2px solid #666;border-color:#666 #444 #444 #666"></div>
<div class="t" style="left:906px;top:477px;font-size:11px">Abrir</div>
<div class="btn" style="left:879px;top:499px;width:74px;height:22px"></div>
<div class="t" style="left:894px;top:504px;font-size:11px">Cancelar</div>
<svg style="left:949px;top:519px" width="11" height="11"><path d="M10 2l-8 8M10 5l-5 5M10 8l-2 2" stroke="#999"/></svg>
</div>

<!-- red highlights -->
<div class="red" style="left:30px;top:37px;width:38px;height:42px"></div>
<div class="red" style="left:439px;top:148px;width:337px;height:27px"></div>
<div class="red" style="left:493px;top:313px;width:455px;height:31px"></div>
<div class="red" style="left:866px;top:465px;width:95px;height:39px"></div>
</div></body></html>
